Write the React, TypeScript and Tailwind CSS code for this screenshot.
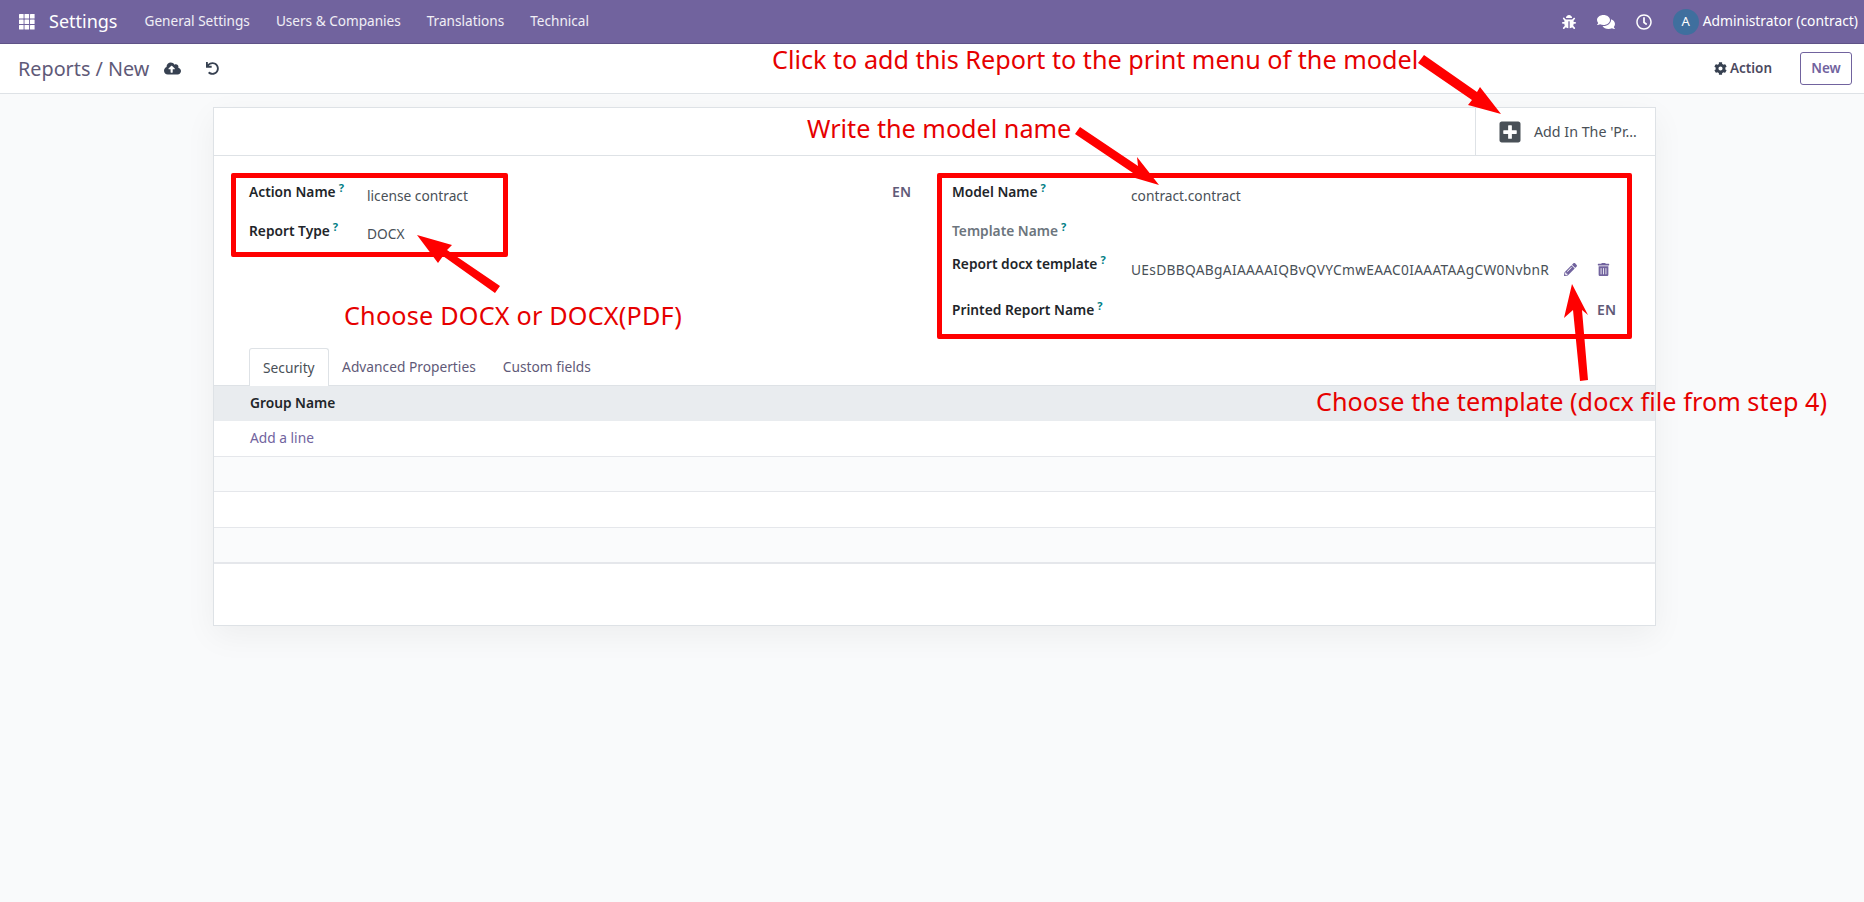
import { FaBug, FaCloudUploadAlt, FaCog, FaComments, FaPencilAlt, FaPlusSquare, FaRegClock, FaTrashAlt, FaUndo } from 'react-icons/fa';

const FONT = "font-['Noto_Sans',sans-serif]";

const NAV_ITEMS = ['General Settings', 'Users & Companies', 'Translations', 'Technical'];
const TABS = ['Security', 'Advanced Properties', 'Custom fields'];

function Help() {
  return <sup className="ml-[3px] text-[11px] font-bold text-[#017e84]">?</sup>;
}

function FieldLabel({ children, muted = false }: { children: React.ReactNode; muted?: boolean }) {
  return (
    <span className={`whitespace-nowrap text-[13.75px] font-semibold ${muted ? 'text-[#6c757d]' : 'text-[#212529]'}`}>
      {children}
      <Help />
    </span>
  );
}

function AppsIcon() {
  return (
    <svg width="16" height="16" viewBox="0 0 16 16" fill="white" aria-hidden="true">
      {[0, 5.5, 11].map((y) =>
        [0, 5.5, 11].map((x) => <rect key={`${x}-${y}`} x={x} y={y} width="4.6" height="4.6" rx="0.5" />),
      )}
    </svg>
  );
}

function NavBar() {
  return (
    <div className="flex h-[44px] items-center border-b border-[#5f5387] bg-[#71639e] pl-[19px] pr-[6px] text-white">
      <AppsIcon />
      <span className="ml-[14px] text-[18px]">Settings</span>
      <div className="ml-[27px] flex gap-[26px] text-[13.6px] text-white/90">
        {NAV_ITEMS.map((item) => (
          <span key={item}>{item}</span>
        ))}
      </div>
      <div className="ml-auto flex items-center">
        <FaBug size={14} />
        <FaComments size={18} className="ml-[21px]" />
        <FaRegClock size={16} className="ml-[21px]" />
        <div className="ml-[21px] flex h-[26px] w-[26px] items-center justify-center rounded-full bg-[#3f6f9e] text-[13px]">A</div>
        <span className="ml-[4px] text-[13.85px]">Administrator (contract)</span>
      </div>
    </div>
  );
}

function ControlPanel() {
  return (
    <div className="flex h-[50px] items-center border-b border-[#dee2e6] bg-white pl-[18px] pr-[12px]">
      <span className="text-[19.8px] text-[#5f5a78]">Reports / New</span>
      <FaCloudUploadAlt size={17} className="ml-[15px] text-[#374151]" />
      <FaUndo size={13} className="ml-[25px] text-[#374151]" />
      <div className="ml-auto flex items-center">
        <FaCog size={13} className="text-[#374151]" />
        <span className="ml-[3px] text-[13.5px] font-semibold text-[#4c4a60]">Action</span>
        <button type="button" className="ml-[28px] h-[33px] w-[52px] rounded-[3px] border border-[#71639e] text-[13.5px] font-semibold text-[#71639e]">
          New
        </button>
      </div>
    </div>
  );
}

function FormSheet() {
  return (
    <div className="ml-[213px] mt-[13px] h-[519px] w-[1443px] border border-[#dee2e6] bg-white shadow-[0_10px_30px_rgba(0,0,0,0.05)]">
      <div className="flex h-[48px] justify-end border-b border-[#dee2e6]">
        <div className="flex w-[180px] items-center border-l border-[#dee2e6] pl-[22px]">
          <FaPlusSquare size={24} className="text-[#495057]" />
          <span className="ml-[12px] pt-px text-[14.25px] text-[#495057]">Add In The 'Pr…</span>
        </div>
      </div>

      <div className="flex h-[192px] pl-[35px] pr-[39px]">
        <div className="flex w-[662px] flex-col pt-[23px]">
          <div className="flex h-[39px] items-start">
            <span className="w-[118px]"><FieldLabel>Action Name</FieldLabel></span>
            <span className="mt-[7px] text-[13.75px] text-[#495057]">license contract</span>
            <span className="ml-auto pt-[2px] text-[14px] font-semibold text-[#5f5a78]">EN</span>
          </div>
          <div className="flex items-start">
            <span className="w-[118px]"><FieldLabel>Report Type</FieldLabel></span>
            <span className="mt-[6px] text-[13.75px] text-[#495057]">DOCX</span>
          </div>
        </div>
        <div className="ml-[41px] flex flex-1 flex-col pt-[23px]">
          <div className="flex h-[42px] items-start">
            <span className="w-[179px]"><FieldLabel>Model Name</FieldLabel></span>
            <span className="mt-[7px] text-[13.75px] text-[#495057]">contract.contract</span>
          </div>
          <div className="flex h-[30px] items-start">
            <FieldLabel muted>Template Name</FieldLabel>
          </div>
          <div className="flex h-[49px] items-start">
            <span className="w-[179px]"><FieldLabel>Report docx template</FieldLabel></span>
            <span className="mt-[9px] w-[418px] overflow-hidden whitespace-nowrap text-[13.75px] tracking-[0.3px] text-[#495057]">UEsDBBQABgAIAAAAIQBvQVYCmwEAAC0IAAATAAgCW0NvbnR</span>
            <FaPencilAlt size={13} className="ml-[15px] mt-[12px] text-[#71639e]" />
            <FaTrashAlt size={13} className="ml-[20px] mt-[12px] text-[#71639e]" />
          </div>
          <div className="flex items-start">
            <FieldLabel>Printed Report Name</FieldLabel>
            <span className="ml-auto -mt-px text-[14px] font-semibold text-[#5f5a78]">EN</span>
          </div>
        </div>
      </div>

      <div className="flex h-[38px] border-b border-[#dee2e6] pl-[35px]">
        {TABS.map((tab, i) => (
          <span
            key={tab}
            className={
              i === 0
                ? 'relative -mb-px flex items-center rounded-t-[3px] border border-b-0 border-[#dee2e6] bg-white px-[13px] pt-px text-[13.75px] text-[#495057]'
                : 'flex items-center px-[13.5px] pt-px text-[13.75px] text-[#5f5a78]'
            }
          >
            {tab}
          </span>
        ))}
      </div>
      <div className="flex h-[35px] items-center bg-[#e9ecef] pl-[36px] text-[13.75px] font-semibold text-[#212529]">Group Name</div>
      <div className="flex h-[36px] items-center border-b border-[#e5e7eb] pl-[36px] text-[13.75px] text-[#71639e]">Add a line</div>
      <div className="h-[35px] border-b border-[#e5e7eb] bg-[#fafbfc]" />
      <div className="h-[36px] border-b border-[#e5e7eb]" />
      <div className="h-[36px] border-b-2 border-[#e5e7eb] bg-[#fafbfc]" />
    </div>
  );
}

function Annotations() {
  const red = 'absolute whitespace-nowrap text-[25.2px] leading-none text-[#e60000]';
  return (
    <>
      <div className="absolute left-[231px] top-[173px] h-[84px] w-[277px] rounded-[2px] border-[5px] border-[#ff0000]" />
      <div className="absolute left-[937px] top-[173px] h-[166px] w-[695px] rounded-[2px] border-[5px] border-[#ff0000]" />
      <span className={`${red} left-[772px] top-[47px]`}>Click to add this Report to the print menu of the model</span>
      <span className={`${red} left-[807px] top-[116px]`}>Write the model name</span>
      <span className={`${red} left-[344px] top-[303px] tracking-[0.2px]`}>Choose DOCX or DOCX(PDF)</span>
      <span className={`${red} left-[1316px] top-[389px] tracking-[0.05px]`}>Choose the template (docx file from step 4)</span>
      <svg className="pointer-events-none absolute left-0 top-0" width="1864" height="902" fill="#ff0000" stroke="none">
        <polygon points="1424,55 1418,63 1472,100 1468,105 1501,114 1480,87 1477,92" />
        <polygon points="1080,127 1075,134 1133,173 1125,175 1159,185 1137,157 1138,166" />
        <polygon points="500,286 495,293 443,256 438,263 417,235 452,245 447,250" />
        <polygon points="1580,381 1588,380 1582,310 1588,315 1572,284 1564,318 1573,310" />
      </svg>
    </>
  );
}

export default function App() {
  return (
    <div className={`relative min-h-[902px] bg-[#f9fafb] ${FONT}`}>
      <NavBar />
      <ControlPanel />
      <FormSheet />
      <Annotations />
    </div>
  );
}
